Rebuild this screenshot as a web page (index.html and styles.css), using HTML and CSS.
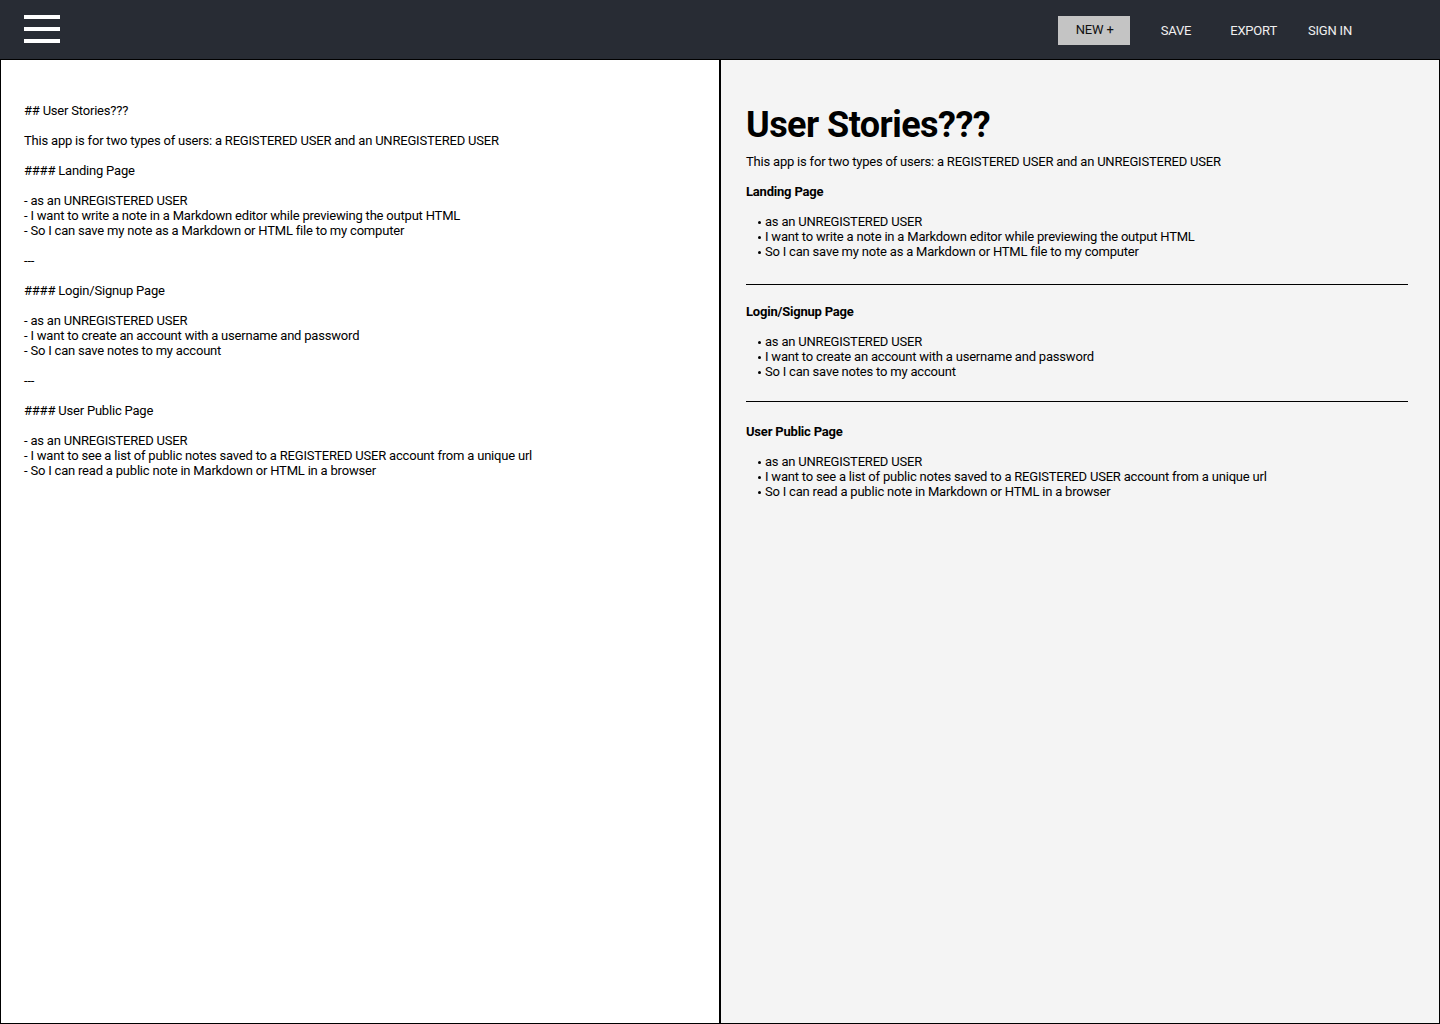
FILE: index.html
```html
<!DOCTYPE html>
<html>
<head>
<meta charset="utf-8">
<link rel="stylesheet" href="styles.css">
</head>
<body>
<header class="topbar">
  <div class="hamburger"><span></span><span></span><span></span></div>
  <nav class="nav">
    <button class="btn-new">NEW +</button>
    <a class="nav-link nav-save">SAVE</a>
    <a class="nav-link nav-export">EXPORT</a>
    <a class="nav-link nav-signin">SIGN IN</a>
  </nav>
</header>
<main class="workspace">
  <section class="editor"><pre class="source">## User Stories???

This app is for two types of users: a REGISTERED USER and an UNREGISTERED USER

#### Landing Page

- as an UNREGISTERED USER
- I want to write a note in a Markdown editor while previewing the output HTML
- So I can save my note as a Markdown or HTML file to my computer

---

#### Login/Signup Page

- as an UNREGISTERED USER
- I want to create an account with a username and password
- So I can save notes to my account

---

#### User Public Page

- as an UNREGISTERED USER
- I want to see a list of public notes saved to a REGISTERED USER account from a unique url
- So I can read a public note in Markdown or HTML in a browser</pre></section>
  <section class="preview">
    <h1 class="title">User Stories???</h1>
    <p class="para">This app is for two types of users: a REGISTERED USER and an UNREGISTERED USER</p>
    <h4 class="subhead">Landing Page</h4>
    <ul class="list">
      <li>as an UNREGISTERED USER</li>
      <li>I want to write a note in a Markdown editor while previewing the output HTML</li>
      <li>So I can save my note as a Markdown or HTML file to my computer</li>
    </ul>
    <hr class="rule rule-1">
    <h4 class="subhead">Login/Signup Page</h4>
    <ul class="list">
      <li>as an UNREGISTERED USER</li>
      <li>I want to create an account with a username and password</li>
      <li>So I can save notes to my account</li>
    </ul>
    <hr class="rule rule-2">
    <h4 class="subhead">User Public Page</h4>
    <ul class="list">
      <li>as an UNREGISTERED USER</li>
      <li>I want to see a list of public notes saved to a REGISTERED USER account from a unique url</li>
      <li>So I can read a public note in Markdown or HTML in a browser</li>
    </ul>
  </section>
</main>
</body>
</html>
```
FILE: styles.css
```css
* { box-sizing: border-box; }
html, body { margin: 0; padding: 0; }
body {
  width: 1440px;
  height: 1024px;
  overflow: hidden;
  font-family: Roboto, "Liberation Sans", sans-serif;
  color: #000;
  background: #fff;
}
.topbar {
  height: 60px;
  background: #282c34;
  border-bottom: 1px solid #000;
  display: flex;
  align-items: center;
  justify-content: space-between;
  padding: 0 88px 0 24px;
}
.hamburger {
  width: 36px;
  display: flex;
  flex-direction: column;
  gap: 8px;
  margin-top: -1px;
}
.hamburger span {
  display: block;
  height: 4px;
  background: #fff;
}
.nav {
  display: flex;
  align-items: center;
  letter-spacing: -0.2px;
}
.btn-new {
  width: 72px;
  height: 29px;
  border: none;
  background: #c4c4c4;
  color: #111;
  font-family: Roboto, "Liberation Sans", sans-serif;
  font-size: 13px;
  letter-spacing: -0.2px;
  padding: 0 0 2px 2px;
  margin-top: 1px;
  margin-right: 31px;
}
.nav-link {
  color: #f0f0f0;
  font-size: 13px;
  line-height: 15px;
  margin-top: 2px;
}
.nav-save { margin-right: 39px; }
.nav-export { margin-right: 31px; }
.workspace {
  display: flex;
  height: 964px;
  border: 1px solid #000;
  border-top: none;
}
.editor {
  width: 720px;
  border-right: 2px solid #000;
  background: #fff;
  padding: 43px 0 0 23px;
}
.source {
  margin: 0;
  font-family: Roboto, "Liberation Sans", sans-serif;
  font-size: 13px;
  line-height: 15px;
  letter-spacing: -0.2px;
  white-space: pre-wrap;
}
.preview {
  flex: 1;
  background: #f4f4f4;
  padding: 0 31px 0 25px;
  font-size: 13px;
  line-height: 15px;
  letter-spacing: -0.2px;
}
.title {
  margin: 44px 0 8px;
  font-size: 36px;
  line-height: 42px;
  font-weight: 700;
  letter-spacing: -0.55px;
}
.para { margin: 0 0 15px; }
.subhead {
  margin: 0 0 15px;
  font-size: 13px;
  line-height: 15px;
  font-weight: 700;
}
.list {
  margin: 0;
  padding: 0 0 0 19px;
  list-style: none;
}
.list li { position: relative; }
.list li::before {
  content: "";
  position: absolute;
  left: -7px;
  top: 7px;
  width: 3px;
  height: 3px;
  border-radius: 50%;
  background: #000;
}
.rule {
  border: none;
  border-top: 1px solid #000;
  height: 0;
  margin: 0;
}
.rule-1 { margin: 25px 0 19px; }
.rule-2 { margin: 22px 0 22px; }
```
